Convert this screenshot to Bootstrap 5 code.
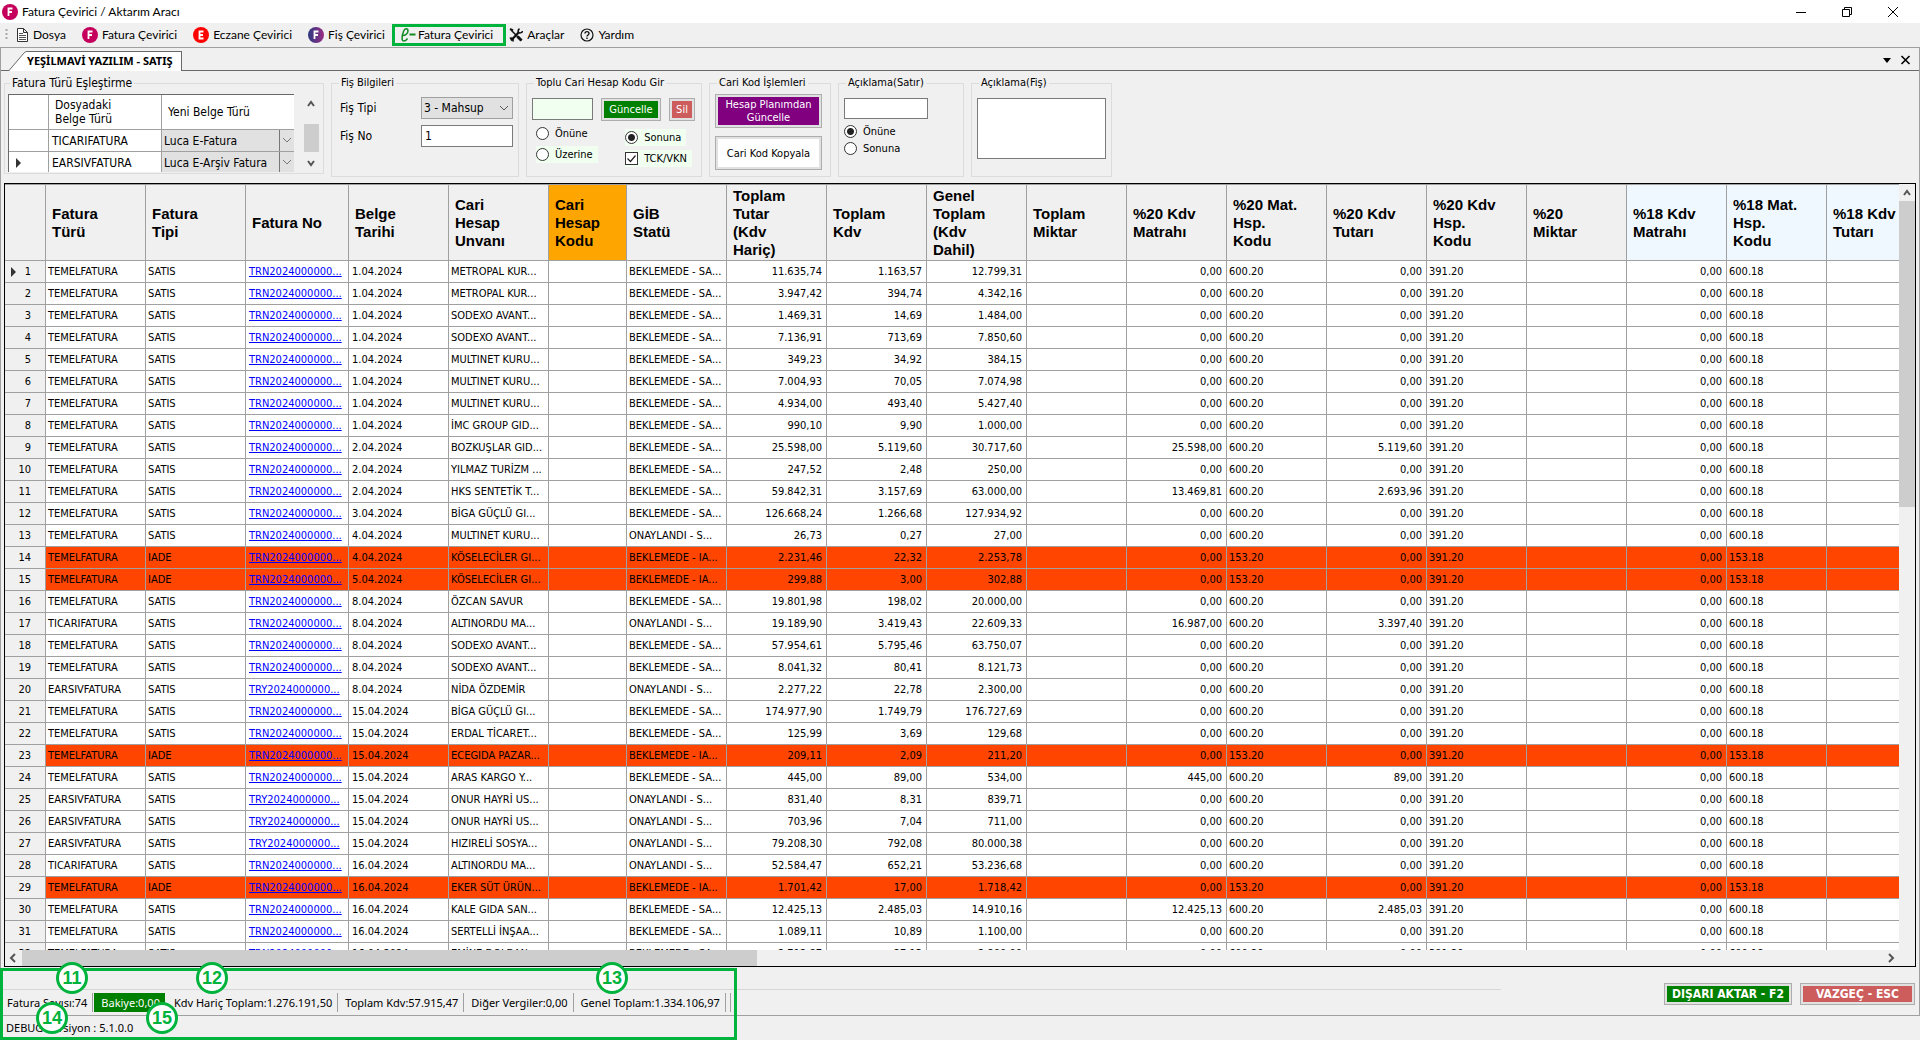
<!DOCTYPE html>
<html lang="tr">
<head>
<meta charset="utf-8">
<meta name="viewport" content="width=device-width, initial-scale=1">
<title>Fatura Çevirici / Aktarım Aracı</title>
<link href="https://cdn.jsdelivr.net/npm/bootstrap@5.3.0/dist/css/bootstrap.min.css" rel="stylesheet">
<style>
:root{--face:#f0f0f0;--line:#a0a0a0;--mark-green:#00b33c;--ui:"DejaVu Sans Condensed","DejaVu Sans",sans-serif;--shell:Lato,"Noto Sans",sans-serif}
body{height:100vh;background:var(--face);color:#000;font-family:var(--ui);font-size:11px;line-height:14px}
input,select,textarea,button{font-family:inherit}
.titlebar{height:23px;padding-left:2px;background:#fff;font-family:var(--shell);font-size:12px}
.titlebar .wbtn{width:46px;height:20px}
.plain{border:0;background:none;padding:0;color:#000;display:flex;align-items:center;justify-content:center}
.menubar{height:24px;font-family:var(--shell);font-size:12px}
.menubar a{color:#000;text-decoration:none;height:20px}
.menubar a.marked{outline:3px solid var(--mark-green);outline-offset:-2px;padding:0 12px 0 7px}
.frame{border:1px solid var(--line);min-height:0}
.tabstrip{height:23px;border-bottom:1px solid #696969}
.tab-slant{margin-bottom:-1px}
.doc-tab{height:20px;margin-bottom:-1px;background:#fff;border:1px solid #696969;border-width:1px 1px 0 0;font-family:"Noto Sans",sans-serif;font-size:11px;font-weight:700;line-height:17px}
.params{padding:5px 3px 6px;gap:7px}
.box{border:1px solid #dcdcdc;padding:0 5px;margin:0;min-width:0;height:101px}
.box legend{float:none;width:auto;margin:0 0 0 2px;padding:0 2px;font-size:11px;line-height:14px}
.box-map{width:320px;height:98px;padding:0 3px}
.box-map legend{font-size:12px}
.box-slip{width:188px}.box-code{width:176px}.box-ops{width:122px}.box-line{width:126px}.box-note{width:141px}
.map-view{height:78px}
.map-table{width:289px;table-layout:fixed;border-collapse:separate;border-spacing:0;font-size:12px;line-height:14px;background:#fff;border:1px solid #696969;border-width:1px 0 0 1px}
.map-table th{height:35px;font-weight:400;padding:0 6px;border:1px solid var(--line);border-width:0 1px 1px 0}
.map-table td{height:22px;padding:0 0 0 3px;border:1px solid var(--line);border-width:0 1px 1px 0}
.map-table td.combo{padding:0}
.drop{appearance:none;border:1px solid var(--line);border-radius:0;background:#e1e1e1 url("data:image/svg+xml,%3Csvg xmlns='http://www.w3.org/2000/svg' width='16' height='20'%3E%3Cpath d='M4 8l4 4 4-4' fill='none' stroke='%23555'/%3E%3C/svg%3E") no-repeat right center;padding:0 16px 0 2px;font-size:12px;color:#000}
.map-table .drop{width:100%;height:21px;border-width:0 1px 0 0;display:block;background-image:url("data:image/svg+xml,%3Csvg xmlns='http://www.w3.org/2000/svg' width='16' height='21'%3E%3Cpath d='M.5 0v21M4 8l4 4 4-4' fill='none' stroke='%23777'/%3E%3C/svg%3E")}
.slip-grid{display:grid;grid-template-columns:81px 92px;row-gap:6px;align-items:center;padding:7px 0 0 3px;font-size:12px}
.slip-grid .drop,.slip-grid .field{height:22px;width:92px}
.field{border:1px solid #7a7a7a;border-radius:0;background:#fff;padding:0 3px;font-size:12px}
.field-code{width:61px;height:22px}.field-line{width:84px;height:21px}.field-note{height:61px;resize:none}
.mint{background:honeydew}
.push{border:1px solid #adadad;box-shadow:inset 0 0 0 2px #e1e1e1;border-radius:0;padding:0;line-height:13px;font-size:11px}
.push-green{background:green;color:#fff}.push-red{background:#cd5c5c;color:#fff}.push-purple{background:purple;color:#fff}.push-white{background:#fff}
.push-update{width:60px;height:23px}.push-del{width:26px;height:23px}
.push-ops{height:34px;width:107px}
.opt{height:17px;gap:6px;padding-right:5px}
.opt input{appearance:none;width:13px;height:13px;margin:0;border:1px solid #333;background:#fff center/11px 11px no-repeat;border-radius:50%}
.opt input[type=radio]:checked{background-image:radial-gradient(circle,#222 0 3px,transparent 4px)}
.opt input[type=checkbox]{border-radius:0}
.opt input[type=checkbox]:checked{background-image:url("data:image/svg+xml,%3Csvg xmlns='http://www.w3.org/2000/svg' width='11' height='11'%3E%3Cpath d='M1.500 5.500l3 3 5-6' fill='none' stroke='%23222' stroke-width='1.200'/%3E%3C/svg%3E")}
.grid-shell{border:1px solid #000;margin:0 3px;min-height:0}
.grid-body{min-height:0}
.grid-view{min-height:0;min-width:0;background:#fff}
.inv{width:1922px;table-layout:fixed;border-collapse:separate;border-spacing:0;line-height:14px}
.inv th,.inv td{border:1px solid var(--line);border-width:0 1px 1px 0;overflow:hidden;white-space:nowrap}
.inv thead th{height:77px;border-top-width:1px;background:var(--face);font:700 15px/18px "Liberation Sans",Arial,sans-serif;padding:0 0 0 6px;vertical-align:middle}
.inv thead .amber{background:orange}.inv thead .alice{background:#f0f8ff}
.inv tbody td{height:22px;padding:0 4px 0 2px}
.inv tbody th{height:22px;background:var(--face);font-weight:400;padding:0 14px 0 0;text-align:right;position:relative}
.inv tbody .cur::before{content:"";position:absolute;left:6px;top:6px;border:5px solid transparent;border-left-color:#333;border-right:0}
.inv .inv-no{padding-left:3px}
.inv a{color:#00f}
.inv .returned td{background:#ff4500}
.vbar{width:16px}.vbar-thumb{background:#cdcdcd;height:306px}
.hbar{height:16px}.hbar-thumb{background:#cdcdcd;width:735px}
.foot{height:48px}
.totals-wrap{max-width:1500px;padding-top:22px}
.totals{border-top:1px solid #d7d7d7;padding-top:3px;font-family:"Noto Sans",sans-serif}
.totals span{height:19px;line-height:19px;border-right:1px solid var(--line);padding:0 5px 0 7px;white-space:nowrap}
.totals span:first-child{padding-left:6px}
.totals .due{background:green;color:#fff;margin:0 2px 0 1px;border:0}
.totals .grip{padding:0 2px}
.push-main{height:22px;font-size:12px;font-weight:700}
.push-export{width:128px}.push-cancel{width:115px}
.version{height:24px;font-family:"Noto Sans",sans-serif;padding:0 6px;line-height:24px}
.callouts{left:0;bottom:0;width:737px;height:72px;border:3px solid var(--mark-green)}
.callouts b{width:32px;height:32px;border:3px solid var(--mark-green);border-radius:50%;background:#fff;color:var(--mark-green);font:700 18px/26px "Liberation Sans",Arial,sans-serif;text-align:center;transform:translate(-50%,-50%)}
.c11{left:69px;top:7px}.c12{left:209px;top:7px}.c13{left:609px;top:7px}.c14{left:49px;top:47px}.c15{left:159px;top:47px}
</style>
<script src="https://cdn.jsdelivr.net/npm/bootstrap@5.3.0/dist/js/bootstrap.bundle.min.js"></script>
</head>
<body class="d-flex flex-column overflow-hidden position-relative">

<header class="titlebar d-flex align-items-center flex-shrink-0">
  <svg class="me-1" width="16" height="16" viewBox="0 0 16 16"><circle cx="8" cy="8" r="8" fill="#c4005c"/><path d="M6.500 12V4.500h4M6.500 8h3.500" fill="none" stroke="#fff" stroke-width="1.800"/></svg>
  <span>Fatura Çevirici / Aktarım Aracı</span>
  <div class="ms-auto d-flex pe-1">
    <button class="plain wbtn" aria-label="Simge durumuna küçült"><svg width="12" height="12"><path d="M1 6.500h10" stroke="#000"/></svg></button>
    <button class="plain wbtn" aria-label="Önceki boyut"><svg width="12" height="12"><path d="M1.500 3.500h7v7h-7zM3.500 3.500v-2h7v7h-2" fill="none" stroke="#000"/></svg></button>
    <button class="plain wbtn" aria-label="Kapat"><svg width="12" height="12"><path d="M1 1l10 10M11 1L1 11" stroke="#000"/></svg></button>
  </div>
</header>

<nav class="menubar d-flex align-items-center flex-shrink-0">
  <svg width="16" height="16"><path d="M6.500 2v12" stroke="#a8a8a8" stroke-width="2" stroke-dasharray="2 2"/></svg>
  <a href="#" class="d-flex align-items-center gap-1 me-3"><svg width="13" height="16"><path d="M1.500 1.500h6l4 4v9h-10zM7.500 1.500v4h4" fill="#fff" stroke="#333"/><path d="M3 6.500h4M3 8.500h7M3 10.500h7M3 12.500h7" stroke="#555"/></svg>Dosya</a>
  <a href="#" class="d-flex align-items-center gap-1 me-3"><svg width="16" height="16"><circle cx="8" cy="8" r="8" fill="#c4005c"/><path d="M6.500 12V4.500h4M6.500 8h3.500" fill="none" stroke="#fff" stroke-width="1.800"/></svg>Fatura Çevirici</a>
  <a href="#" class="d-flex align-items-center gap-1 me-3"><svg width="16" height="16"><circle cx="8" cy="8" r="8" fill="#f00"/><path d="M10.500 4.500h-4v7h4M6.500 8h3.500" fill="none" stroke="#fff" stroke-width="1.800"/></svg>Eczane Çevirici</a>
  <a href="#" class="d-flex align-items-center gap-1"><svg width="16" height="16"><defs><linearGradient id="fis"><stop offset="0" stop-color="#2b3a80"/><stop offset="1" stop-color="#9a2d86"/></linearGradient></defs><circle cx="8" cy="8" r="8" fill="url(#fis)"/><path d="M6.500 12V4.500h4M6.500 8h3.500" fill="none" stroke="#fff" stroke-width="1.800"/></svg>Fiş Çevirici</a>
  <a href="#" class="marked d-flex align-items-center ms-2 me-1"><svg width="18" height="16"><path d="M2 8.500c3 .5 6-2 6-4.500S5 .5 3.500 4.500 1 14 4 14c1.500 0 2.500-1 3.500-2.500" fill="none" stroke="#118a22" stroke-width="1.500"/><path d="M9.500 7.500h6" stroke="#118a22" stroke-width="2"/></svg>Fatura Çevirici</a>
  <a href="#" class="d-flex align-items-center gap-1 me-3"><svg width="14" height="14"><path d="M2.500 2.500l10 10" stroke="#111" stroke-width="1.500"/><path d="M8.500 8.500l4 4" stroke="#111" stroke-width="3"/><path d="M1 1l3 1.500" stroke="#111" stroke-width="2"/><path d="M10 4L2 12.500" stroke="#111" stroke-width="2.200"/><path d="M10.500.8C8.500 2 9 5 10.500 5s3 0 3-2M.8 10.500c2-1 4 .5 3 3" fill="none" stroke="#111" stroke-width="1.600"/></svg>Araçlar</a>
  <a href="#" class="d-flex align-items-center gap-1"><svg width="14" height="14"><circle cx="7" cy="7" r="6" fill="none" stroke="#111" stroke-width="1.200"/><path d="M5 5.500c0-2.500 4-2.500 4 0C9 7 7 7 7 8.500M7 9.500V11" fill="none" stroke="#111" stroke-width="1.400"/></svg>Yardım</a>
</nav>

<main class="frame d-flex flex-column flex-grow-1">
  <div class="tabstrip d-flex align-items-end flex-shrink-0 ps-1">
    <svg class="tab-slant ms-1" width="18" height="20"><path d="M0 20L15 2Q16 .5 18 .5V20z" fill="#fff"/><path d="M0 19.500L15 2Q16 .5 18 .5" fill="none" stroke="#696969"/></svg>
    <div class="doc-tab pe-2">YEŞİLMAVİ YAZILIM - SATIŞ</div>
    <div class="ms-auto d-flex gap-2 pe-2 pb-1">
      <button class="plain" aria-label="Sekmeler"><svg width="10" height="12"><path d="M1 4h8L5 9z"/></svg></button>
      <button class="plain" aria-label="Sekmeyi kapat"><svg width="11" height="12"><path d="M1.500 2l8 8M9.500 2l-8 8" stroke="#000" stroke-width="1.600"/></svg></button>
    </div>
  </div>

  <section class="params d-flex align-items-start flex-shrink-0">
    <fieldset class="box box-map">
      <legend>Fatura Türü Eşleştirme</legend>
      <div class="d-flex pt-1">
        <div class="map-view overflow-hidden">
          <table class="map-table">
            <colgroup><col style="width:40px"><col style="width:113px"><col></colgroup>
            <thead><tr><th></th><th>Dosyadaki<br>Belge Türü</th><th>Yeni Belge Türü</th></tr></thead>
            <tbody>
              <tr><td></td><td>TICARIFATURA</td><td class="combo"><select class="drop" aria-label="TICARIFATURA yeni belge türü"><option>Luca E-Fatura</option></select></td></tr>
              <tr><td><svg width="12" height="12"><path d="M4 1l5 5-5 5z" fill="#333"/></svg></td><td>EARSIVFATURA</td><td class="combo"><select class="drop" aria-label="EARSIVFATURA yeni belge türü"><option>Luca E-Arşiv Fatura</option></select></td></tr>
            </tbody>
          </table>
        </div>
        <svg class="ms-2" width="18" height="78"><path d="M2 30h15v28H2z" fill="#cdcdcd"/><path d="M6 12l3-4 3 4M6 67l3 4 3-4" fill="none" stroke="#555" stroke-width="2"/></svg>
      </div>
    </fieldset>

    <fieldset class="box box-slip">
      <legend>Fiş Bilgileri</legend>
      <div class="slip-grid">
        <label for="fisTipi">Fiş Tipi</label><select id="fisTipi" class="drop"><option>3 - Mahsup</option></select>
        <label for="fisNo">Fiş No</label><input id="fisNo" class="field" value="1">
      </div>
    </fieldset>

    <fieldset class="box box-code">
      <legend>Toplu Cari Hesap Kodu Gir</legend>
      <div class="d-flex gap-2 pt-2">
        <input class="field field-code mint" aria-label="Cari hesap kodu">
        <button class="push push-green push-update">Güncelle</button>
        <button class="push push-red push-del">Sil</button>
      </div>
      <div class="d-flex justify-content-between ps-1 pe-1">
        <div class="d-flex flex-column gap-1 align-items-start pt-1">
          <label class="opt d-flex align-items-center"><input type="radio" name="kod">Önüne</label>
          <label class="opt mint d-flex align-items-center"><input type="radio" name="kod">Üzerine</label>
        </div>
        <div class="d-flex flex-column gap-1 align-items-start pt-2">
          <label class="opt mint d-flex align-items-center"><input type="radio" name="kod" checked>Sonuna</label>
          <label class="opt mint d-flex align-items-center"><input type="checkbox" checked>TCK/VKN</label>
        </div>
      </div>
    </fieldset>

    <fieldset class="box box-ops">
      <legend>Cari Kod İşlemleri</legend>
      <div class="d-flex flex-column gap-2 pt-1">
        <button class="push push-purple push-ops">Hesap Planımdan<br>Güncelle</button>
        <button class="push push-white push-ops">Cari Kod Kopyala</button>
      </div>
    </fieldset>

    <fieldset class="box box-line">
      <legend>Açıklama(Satır)</legend>
      <div class="pt-2"><input class="field field-line d-block" aria-label="Satır açıklaması"></div>
      <div class="pt-1">
        <label class="opt d-flex align-items-center"><input type="radio" name="satir" checked>Önüne</label>
        <label class="opt d-flex align-items-center"><input type="radio" name="satir">Sonuna</label>
      </div>
    </fieldset>

    <fieldset class="box box-note">
      <legend>Açıklama(Fiş)</legend>
      <div class="pt-2"><textarea class="field field-note d-block w-100" aria-label="Fiş açıklaması"></textarea></div>
    </fieldset>
  </section>

  <section class="grid-shell d-flex flex-column flex-grow-1">
    <div class="grid-body d-flex flex-grow-1">
      <div class="grid-view flex-grow-1 overflow-hidden">
        <table class="inv">
          <colgroup id="cols"></colgroup>
          <thead><tr>
            <th></th><th>Fatura<br>Türü</th><th>Fatura<br>Tipi</th><th>Fatura No</th><th>Belge<br>Tarihi</th><th>Cari<br>Hesap<br>Unvanı</th><th class="amber">Cari<br>Hesap<br>Kodu</th><th>GİB<br>Statü</th><th>Toplam<br>Tutar<br>(Kdv<br>Hariç)</th><th>Toplam<br>Kdv</th><th>Genel<br>Toplam<br>(Kdv<br>Dahil)</th><th>Toplam<br>Miktar</th><th>%20 Kdv<br>Matrahı</th><th>%20 Mat.<br>Hsp.<br>Kodu</th><th>%20 Kdv<br>Tutarı</th><th>%20 Kdv<br>Hsp.<br>Kodu</th><th>%20<br>Miktar</th><th class="alice">%18 Kdv<br>Matrahı</th><th class="alice">%18 Mat.<br>Hsp.<br>Kodu</th><th class="alice">%18 Kdv<br>Tutarı</th>
          </tr></thead>
          <tbody id="rows"></tbody>
        </table>
      </div>
      <div class="vbar flex-shrink-0">
        <svg class="d-block" width="16" height="17"><path d="M5 11l3-4 3 4" fill="none" stroke="#555" stroke-width="2"/></svg>
        <div class="vbar-thumb"></div>
      </div>
    </div>
    <div class="hbar d-flex align-items-center flex-shrink-0">
      <svg width="17" height="16"><path d="M10 4L6 8l4 4" fill="none" stroke="#555" stroke-width="2"/></svg>
      <div class="hbar-thumb h-100"></div>
      <svg class="ms-auto me-3" width="17" height="16"><path d="M7 4l4 4-4 4" fill="none" stroke="#555" stroke-width="2"/></svg>
    </div>
  </section>

  <footer class="foot d-flex flex-shrink-0">
    <div class="totals-wrap flex-grow-1">
      <div class="totals d-flex">
        <span>Fatura Sayısı:74</span><span class="due">Bakiye:0,00</span><span>Kdv Hariç Toplam:1.276.191,50</span><span>Toplam Kdv:57.915,47</span><span>Diğer Vergiler:0,00</span><span>Genel Toplam:1.334.106,97</span><span class="grip"></span>
      </div>
    </div>
    <div class="ms-auto d-flex gap-2 pt-3 pe-1">
      <button class="push push-green push-main push-export">DIŞARI AKTAR - F2</button>
      <button class="push push-red push-main push-cancel">VAZGEÇ - ESC</button>
    </div>
  </footer>
</main>

<div class="version flex-shrink-0">DEBUG Versiyon : 5.1.0.0</div>

<div class="callouts position-absolute">
  <b class="c11 position-absolute">11</b><b class="c12 position-absolute">12</b><b class="c13 position-absolute">13</b><b class="c14 position-absolute">14</b><b class="c15 position-absolute">15</b>
</div>

<script>
// column widths of the invoice grid
document.getElementById('cols').innerHTML =
  [41,100,100,103,100,100,78,100,100,100,100,100,100,100,100,100,100,100,100,100].map(w => `<col style="width:${w}px">`).join('');

// date | customer | total | vat | grand total | 20% base | 20% vat | flags (R return, O approved, T commercial, E e-archive, Y TRY series)
const data = `1.04.2024|METROPAL KUR...|11.635,74|1.163,57|12.799,31
1.04.2024|METROPAL KUR...|3.947,42|394,74|4.342,16
1.04.2024|SODEXO AVANT...|1.469,31|14,69|1.484,00
1.04.2024|SODEXO AVANT...|7.136,91|713,69|7.850,60
1.04.2024|MULTINET KURU...|349,23|34,92|384,15
1.04.2024|MULTINET KURU...|7.004,93|70,05|7.074,98
1.04.2024|MULTINET KURU...|4.934,00|493,40|5.427,40
1.04.2024|İMC GROUP GID...|990,10|9,90|1.000,00
2.04.2024|BOZKUŞLAR GID...|25.598,00|5.119,60|30.717,60|25.598,00|5.119,60
2.04.2024|YILMAZ TURİZM ...|247,52|2,48|250,00
2.04.2024|HKS SENTETİK T...|59.842,31|3.157,69|63.000,00|13.469,81|2.693,96
3.04.2024|BİGA GÜÇLÜ GI...|126.668,24|1.266,68|127.934,92
4.04.2024|MULTINET KURU...|26,73|0,27|27,00|||O
4.04.2024|KÖSELECİLER GI...|2.231,46|22,32|2.253,78|||R
5.04.2024|KÖSELECİLER GI...|299,88|3,00|302,88|||R
8.04.2024|ÖZCAN SAVUR|19.801,98|198,02|20.000,00
8.04.2024|ALTINORDU MA...|19.189,90|3.419,43|22.609,33|16.987,00|3.397,40|OT
8.04.2024|SODEXO AVANT...|57.954,61|5.795,46|63.750,07
8.04.2024|SODEXO AVANT...|8.041,32|80,41|8.121,73
8.04.2024|NİDA ÖZDEMİR|2.277,22|22,78|2.300,00|||OEY
15.04.2024|BİGA GÜÇLÜ GI...|174.977,90|1.749,79|176.727,69
15.04.2024|ERDAL TİCARET...|125,99|3,69|129,68
15.04.2024|ECEGIDA PAZAR...|209,11|2,09|211,20|||R
15.04.2024|ARAS KARGO Y...|445,00|89,00|534,00|445,00|89,00
15.04.2024|ONUR HAYRİ US...|831,40|8,31|839,71|||OEY
15.04.2024|ONUR HAYRİ US...|703,96|7,04|711,00|||OEY
15.04.2024|HIZIRELİ SOSYA...|79.208,30|792,08|80.000,38|||OEY
16.04.2024|ALTINORDU MA...|52.584,47|652,21|53.236,68|||OT
16.04.2024|EKER SÜT ÜRÜN...|1.701,42|17,00|1.718,42|||R
16.04.2024|KALE GIDA SAN...|12.425,13|2.485,03|14.910,16|12.425,13|2.485,03
16.04.2024|SERTELLİ İNŞAA...|1.089,11|10,89|1.100,00
16.04.2024|EMİNE DOLDAN...|2.712,87|27,13|2.800,00`;
document.getElementById('rows').innerHTML = data.split('\n').map((line, i) => {
  const [date, name, net, vat, gross, base, vat20, f = ''] = line.split('|');
  const has = c => f.includes(c), num = v => `<td class="text-end">${v || '0,00'}</td>`;
  const kind = has('T') ? 'TICARIFATURA' : has('E') ? 'EARSIVFATURA' : 'TEMELFATURA';
  const state = has('O') ? 'ONAYLANDI - S...' : has('R') ? 'BEKLEMEDE - IA...' : 'BEKLEMEDE - SA...';
  const acc = has('R') ? '153' : '600';
  return `<tr class="${has('R') ? 'returned' : ''}"><th scope="row" class="${i ? '' : 'cur'}">${i + 1}</th><td>${kind}</td><td>${has('R') ? 'IADE' : 'SATIS'}</td>`
    + `<td class="inv-no"><a href="#">${has('Y') ? 'TRY' : 'TRN'}2024000000...</a></td><td class="inv-no">${date}</td><td>${name}</td><td></td><td>${state}</td>`
    + num(net) + num(vat) + num(gross) + '<td></td>' + num(base) + `<td>${acc}.20</td>` + num(vat20) + '<td>391.20</td><td></td>'
    + num() + `<td>${acc}.18</td><td></td></tr>`;
}).join('');
</script>
</body>
</html>
